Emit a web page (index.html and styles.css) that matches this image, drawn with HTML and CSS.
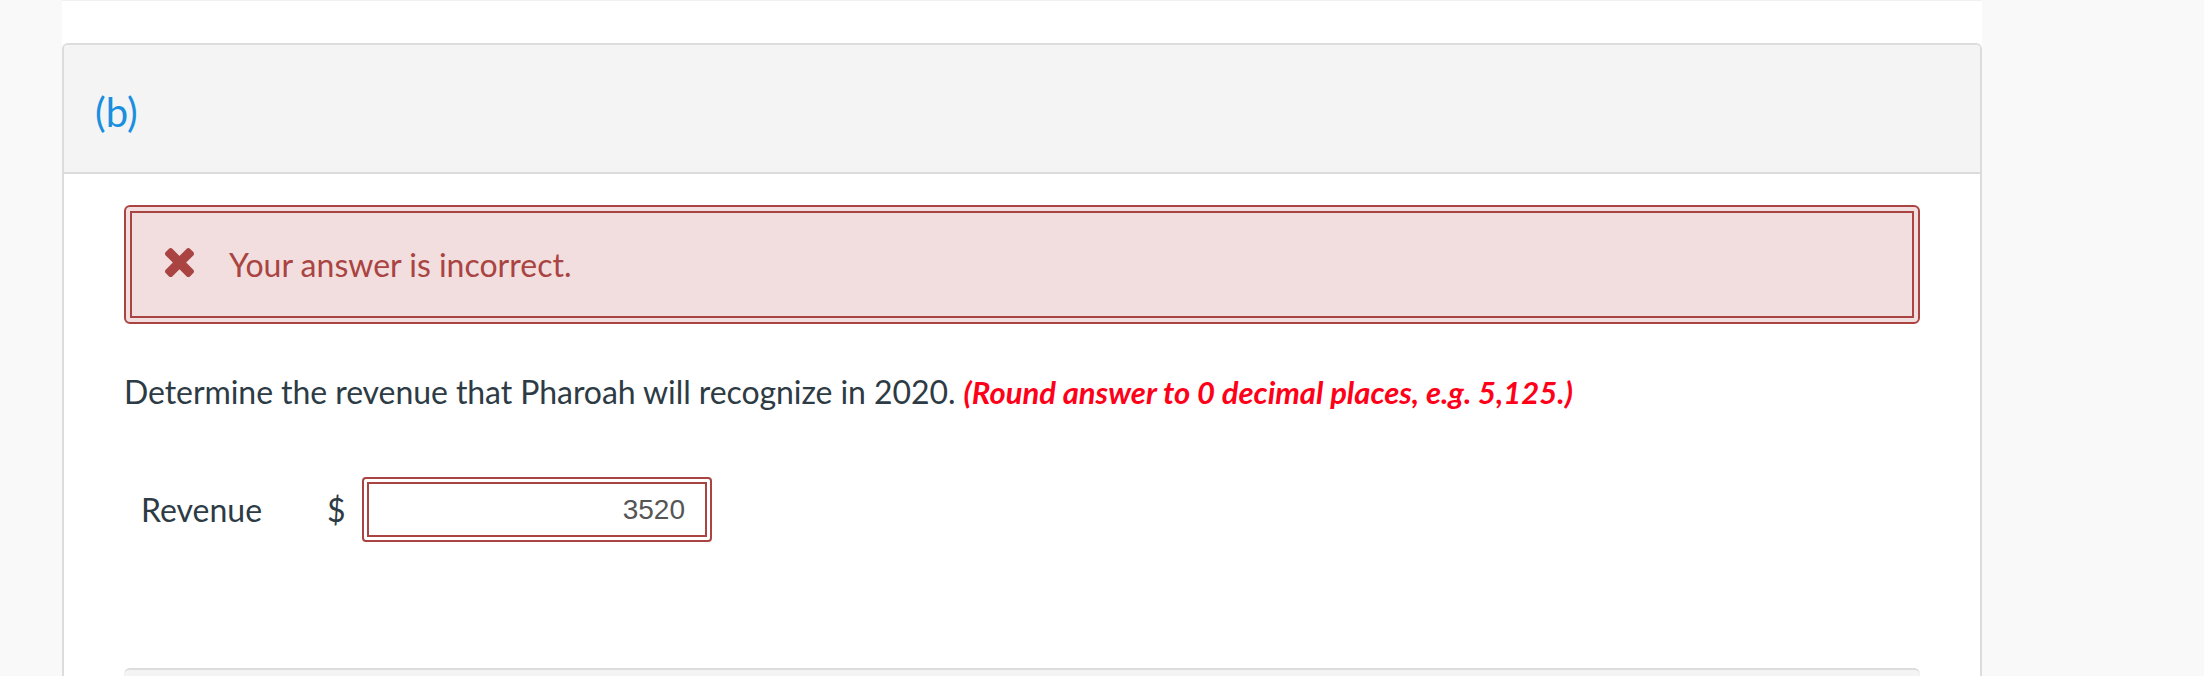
FILE: index.html
```html
<!DOCTYPE html>
<html lang="en">
<head>
<meta charset="utf-8">
<title>Question (b)</title>
<link rel="stylesheet" href="styles.css">
</head>
<body>
<div class="page">
  <section class="card">
    <header class="card-header"><span class="part">(b)</span></header>
    <div class="card-body">
      <div class="alert">
        <div class="alert-inner">
          <svg class="x-icon" viewBox="0 192 1188 1224" aria-hidden="true"><path transform="matrix(1 0 0 -1 0 1608)" d="M1188 1184q0 40-28 68l-136 136q-28 28-68 28t-68-28l-294-294-294 294q-28 28-68 28t-68-28l-136-136q-28-28-28-68t28-68l294-294-294-294q-28-28-28-68t28-68l136-136q28-28 68-28t68 28l294 294 294-294q28-28 68-28t68 28l136 136q28 28 28 68t-28 68l-294 294 294 294q28 28 28 68z"/></svg>
          <span class="alert-text">Your answer is incorrect.</span>
        </div>
      </div>
      <p class="question">Determine the revenue that Pharoah will recognize in 2020. <em class="hint">(Round answer to 0 decimal places, e.g. 5,125.)</em></p>
      <div class="answer-row">
        <span class="label">Revenue</span>
        <span class="currency">$</span>
        <span class="field-wrap"><input class="field" type="text" value="3520" readonly></span>
      </div>
      <div class="next-card"></div>
    </div>
  </section>
</div>
</body>
</html>
```
FILE: styles.css
```css
html, body {
  margin: 0;
  padding: 0;
  background: #f9f9f9;
  height: 100%;
  overflow: hidden;
}
body {
  font-family: Lato, "Open Sans", sans-serif;
  color: #2d3b45;
}
.page {
  margin-left: 62px;
  width: 1920px;
  height: 676px;
  background: #fff;
  border-top: 1px solid #f0f0f0;
  padding-top: 42px;
  box-sizing: border-box;
  overflow: hidden;
}
.card {
  border: 2px solid #dcdcdc;
  border-bottom: none;
  border-radius: 6px 6px 0 0;
  background: #fff;
}
.card-header {
  height: 127px;
  background: #f4f4f4;
  border-bottom: 2px solid #dcdcdc;
  border-radius: 4px 4px 0 0;
  display: flex;
  align-items: center;
  padding-left: 31px;
}
.part {
  font-size: 40px;
  color: #1a8fe0;
  line-height: 1;
  margin-top: 6px;
}
.card-body {
  padding: 31px 60px 0;
}
.alert {
  border: 2px solid #a94442;
  border-radius: 6px;
  padding: 4px;
  background: #f2dede;
}
.alert-inner {
  border: 2px solid #a94442;
  height: 103px;
  display: flex;
  align-items: center;
  padding-left: 33px;
  gap: 35px;
}
.x-icon {
  width: 29px;
  height: 30px;
  fill: #a94442;
  margin-top: -4px;
}
.alert-text {
  font-size: 32px;
  color: #a94442;
}
.question {
  margin: 44px 0 0;
  font-size: 32px;
  line-height: 48px;
  letter-spacing: -0.07px;
}
.hint {
  font-weight: bold;
  font-size: 31px;
  letter-spacing: 0;
  color: #ff0019;
}
.answer-row {
  margin-top: 61px;
  display: flex;
  align-items: center;
  padding-left: 17px;
}
.label {
  font-size: 32px;
  width: 186px;
}
.currency {
  font-size: 32px;
  width: 35px;
}
.field-wrap {
  display: inline-block;
  border: 2px solid #a94442;
  border-radius: 4px;
  padding: 3px;
}
.field {
  display: block;
  width: 316px;
  height: 51px;
  box-sizing: content-box;
  border: 2px solid #a94442;
  padding: 0 20px 0 0;
  margin: 0;
  text-align: right;
  font-family: "Liberation Sans", Arial, sans-serif;
  font-size: 28px;
  color: #555;
  background: #fff;
  outline: none;
}
.next-card {
  margin-top: 126px;
  height: 8px;
  background: #f4f4f4;
  border-top: 2px solid #dcdcdc;
  border-radius: 6px 6px 0 0;
}
```
